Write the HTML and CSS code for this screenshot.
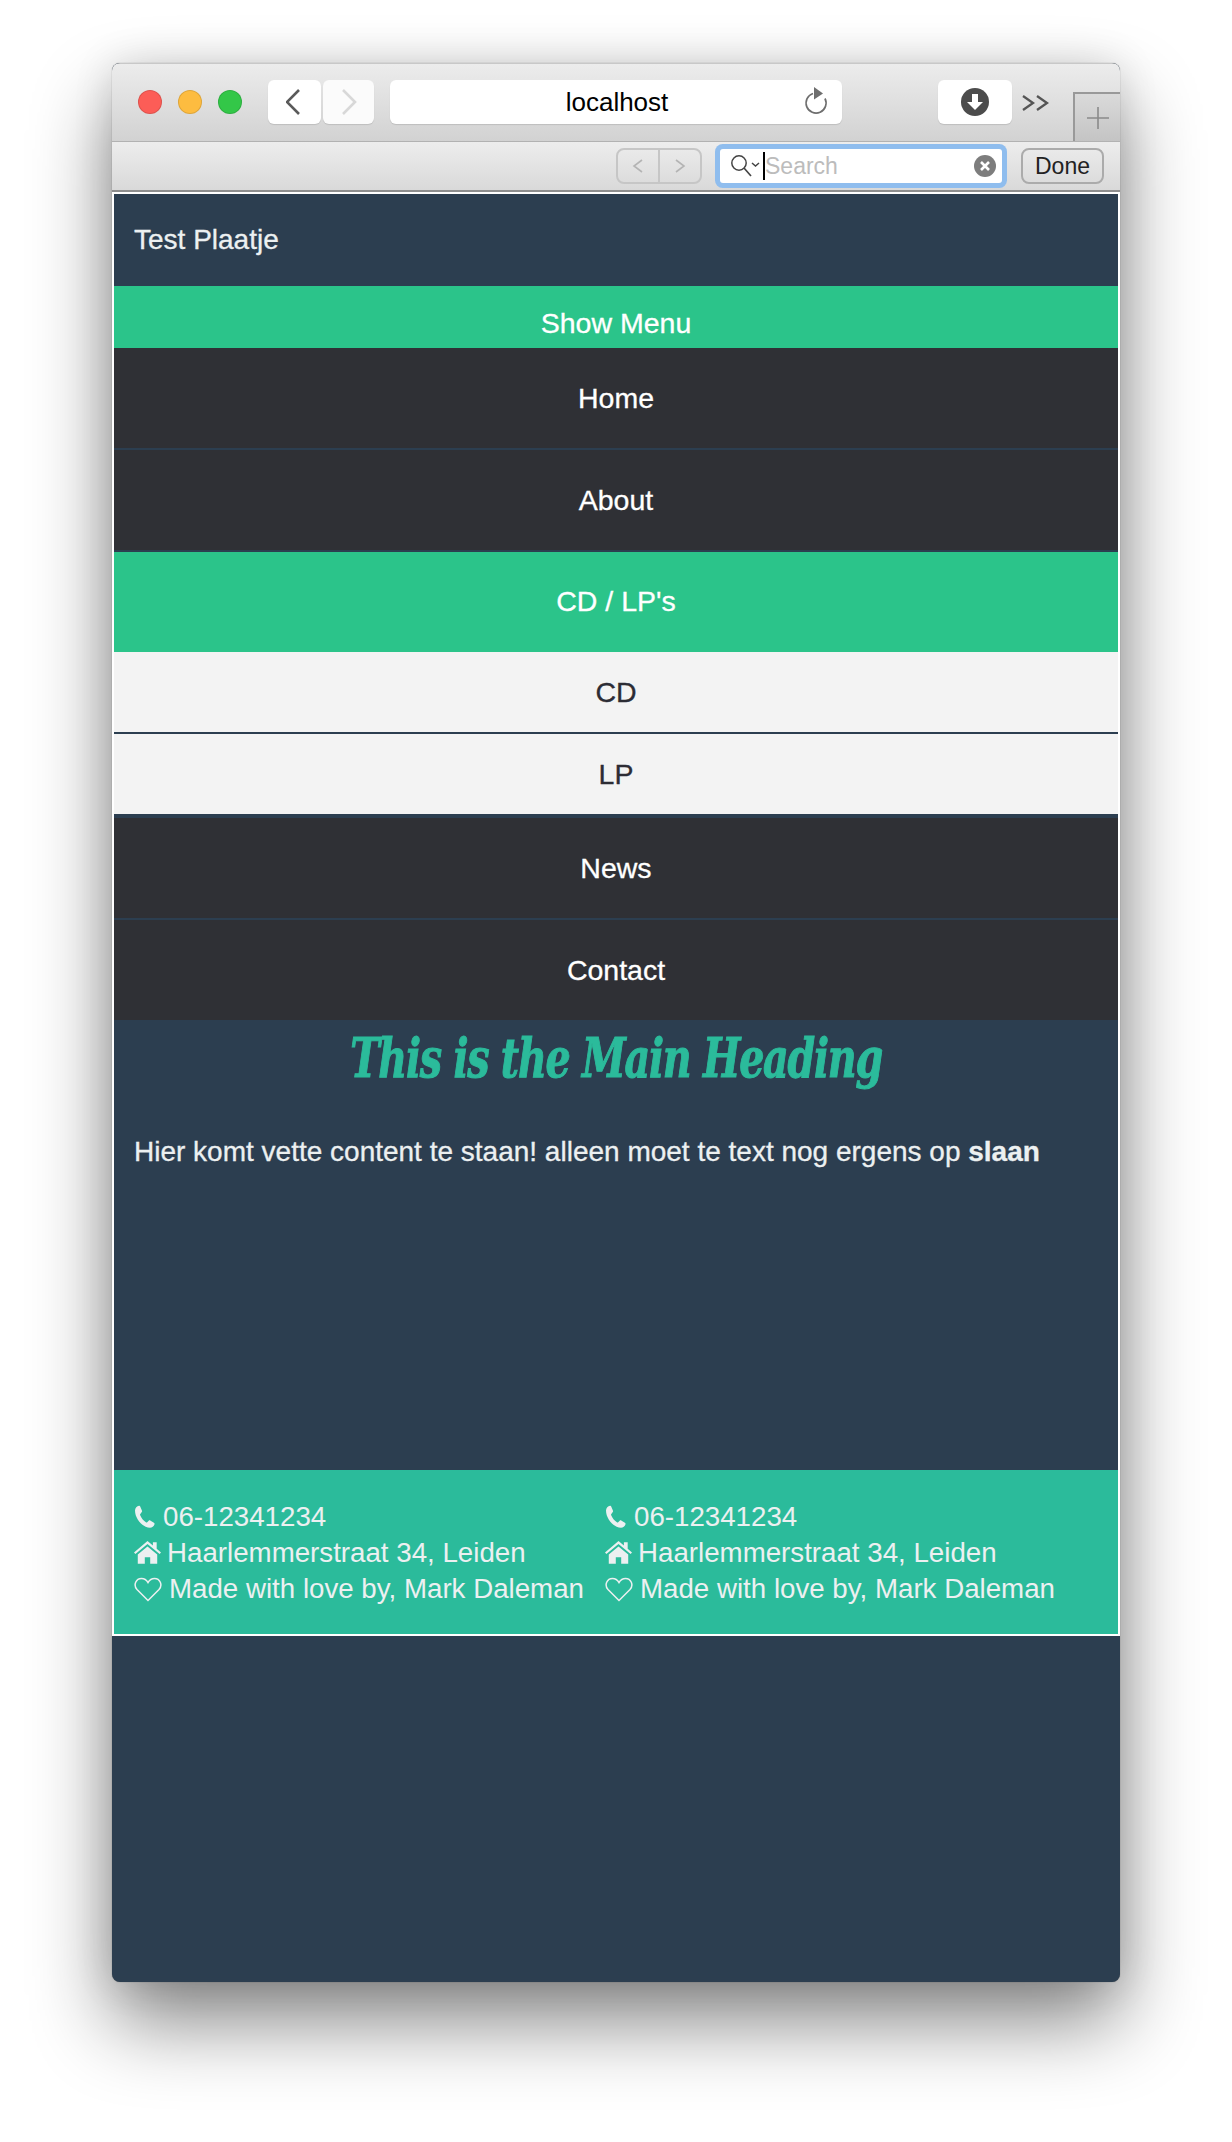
FILE: index.html
```html
<!DOCTYPE html>
<html>
	<head>
		<meta charset="utf-8">
		<title>localhost</title>
		<link rel="stylesheet" href="styles.css">
	</head>
	<body>
		<div class="window">
			<div class="titlebar">
				<div class="lights">
					<span class="light red"></span>
					<span class="light yellow"></span>
					<span class="light green"></span>
				</div>
				<div class="history">
					<span class="tool back">
						<svg width="18" height="28" viewBox="0 0 18 28"><path d="M13 2 1 14l12 12" fill="none" stroke="#5a5a5a" stroke-width="2.6"/></svg>
					</span>
					<span class="tool forward">
						<svg width="18" height="28" viewBox="0 0 18 28"><path d="M3 2l12 12L3 26" fill="none" stroke="#d8d8d8" stroke-width="2.6"/></svg>
					</span>
				</div>
				<div class="address">
					<span class="address-text">localhost</span>
					<svg class="reload" width="26" height="30" viewBox="0 0 26 30"><path d="M10 7.500a10 10 0 1 0 12 5" fill="none" stroke="#6e6e6e" stroke-width="1.700"/><path d="M11 1l9 6.500-9 6z" fill="#6e6e6e"/></svg>
				</div>
				<span class="tool download">
					<svg width="28" height="28" viewBox="0 0 28 28"><circle cx="14" cy="14" r="14" fill="#4c4c4c"/><path d="M11 6h6v8h5l-8 8-8-8h5z" fill="#fff"/></svg>
				</span>
				<svg class="more" width="28" height="18" viewBox="0 0 28 18"><path d="M2 2l10 7-10 7M16 2l10 7-10 7" fill="none" stroke="#555" stroke-width="2.300"/></svg>
				<div class="newtab">
					<svg width="24" height="24" viewBox="0 0 24 24"><path d="M12 1v22M1 12h22" stroke="#8a8a8a" stroke-width="1.600"/></svg>
				</div>
			</div>
			<div class="findbar">
				<div class="stepper">
					<span class="step">
						<svg width="12" height="16" viewBox="0 0 12 16"><path d="M10 2 2 8l8 6" fill="none" stroke="#b4b4b4" stroke-width="1.600"/></svg>
					</span>
					<span class="step">
						<svg width="12" height="16" viewBox="0 0 12 16"><path d="M2 2l8 6-8 6" fill="none" stroke="#b4b4b4" stroke-width="1.600"/></svg>
					</span>
				</div>
				<div class="search">
					<svg width="32" height="26" viewBox="0 0 32 26"><circle cx="9" cy="10" r="7.200" fill="none" stroke="#444" stroke-width="1.500"/><path d="M14 15l7 8" stroke="#444" stroke-width="1.700"/><path d="M22 10l3.500 3 3.500-3" fill="none" stroke="#444" stroke-width="1.500"/></svg>
					<span class="caret"></span>
					<span class="search-text">Search</span>
					<svg class="clear" width="22" height="22" viewBox="0 0 22 22"><circle cx="11" cy="11" r="11" fill="#7d7d7d"/><path d="M7 7l8 8M15 7l-8 8" stroke="#fff" stroke-width="2.600"/></svg>
				</div>
				<span class="done">Done</span>
			</div>
			<div class="page">
				<div class="brand">Test Plaatje</div>
				<div class="menu-toggle">Show Menu</div>
				<ul class="nav">
					<li class="nav-item"><a href="#">Home</a></li>
					<li class="nav-item"><a href="#">About</a></li>
					<li class="nav-item active"><a href="#">CD / LP's</a></li>
					<li class="sub-item"><a href="#">CD</a></li>
					<li class="sub-item last"><a href="#">LP</a></li>
					<li class="nav-item"><a href="#">News</a></li>
					<li class="nav-item end"><a href="#">Contact</a></li>
				</ul>
				<div class="content">
					<h1>This is the Main Heading</h1>
					<p>Hier komt vette content te staan! alleen moet te text nog ergens op <strong>slaan</strong></p>
				</div>
				<div class="footer">
					<div class="footer-col">
						<div class="line">
							<svg class="ico phone" width="22" height="24" viewBox="0 0 22 24"><path d="M1 5.500C1 3 3 1 5 .8c.7 0 1 .3 1.300 1l1.700 4c.2.600 0 1-.4 1.500L6.300 9c-.3.400-.3.800-.1 1.300 1.200 3 3 5.200 5.700 7 .5.300.9.300 1.300-.1l1.500-1.500c.5-.4 1-.5 1.500-.2l3.700 2.300c.6.400.8.800.6 1.400-.6 2-2.500 3.500-4.500 3.500C9 22.700 1 14 1 5.500z" fill="#ecf0f1"/></svg>
							<span>06-12341234</span>
						</div>
						<div class="line">
							<svg class="ico house" width="27" height="24" viewBox="0 0 25 22"><path d="M12.500 0 0 10.500l1.300 1.500 11.200-9.400L23.700 12l1.300-1.500-4-3.400V1h-3.500v3.100z" fill="#ecf0f1"/><path d="M12.500 5 3.500 12.500V21h6.500v-6h5v6h6.500v-8.500z" fill="#ecf0f1"/></svg>
							<span>Haarlemmerstraat 34, Leiden</span>
						</div>
						<div class="line">
							<svg class="ico" width="28" height="25" viewBox="0 0 28 25"><path d="M14 23.500 3 12.500C-1 8 2 1.500 7.500 1.500c3 0 5 1.500 6.500 4 1.500-2.500 3.500-4 6.500-4C26 1.500 29 8 25 12.500z" fill="none" stroke="#ecf0f1" stroke-width="1.500"/></svg>
							<span>Made with love by, Mark Daleman</span>
						</div>
					</div>
					<div class="footer-col">
						<div class="line">
							<svg class="ico phone" width="22" height="24" viewBox="0 0 22 24"><path d="M1 5.500C1 3 3 1 5 .8c.7 0 1 .3 1.300 1l1.700 4c.2.600 0 1-.4 1.500L6.300 9c-.3.400-.3.800-.1 1.300 1.200 3 3 5.200 5.700 7 .5.300.9.300 1.300-.1l1.500-1.500c.5-.4 1-.5 1.500-.2l3.700 2.300c.6.400.8.800.6 1.400-.6 2-2.500 3.500-4.500 3.500C9 22.700 1 14 1 5.500z" fill="#ecf0f1"/></svg>
							<span>06-12341234</span>
						</div>
						<div class="line">
							<svg class="ico house" width="27" height="24" viewBox="0 0 25 22"><path d="M12.500 0 0 10.500l1.300 1.500 11.200-9.400L23.700 12l1.300-1.500-4-3.400V1h-3.500v3.100z" fill="#ecf0f1"/><path d="M12.500 5 3.500 12.500V21h6.500v-6h5v6h6.500v-8.500z" fill="#ecf0f1"/></svg>
							<span>Haarlemmerstraat 34, Leiden</span>
						</div>
						<div class="line">
							<svg class="ico" width="28" height="25" viewBox="0 0 28 25"><path d="M14 23.500 3 12.500C-1 8 2 1.500 7.500 1.500c3 0 5 1.500 6.500 4 1.500-2.500 3.500-4 6.500-4C26 1.500 29 8 25 12.500z" fill="none" stroke="#ecf0f1" stroke-width="1.500"/></svg>
							<span>Made with love by, Mark Daleman</span>
						</div>
					</div>
				</div>
			</div>
		</div>
	</body>
</html>
```

FILE: styles.css
```css
* { margin: 0; padding: 0; box-sizing: border-box; text-decoration: none; list-style: none;}
body { padding: 63px 112px 160px; background: #fff; font-family: "Liberation Sans", Arial, sans-serif;}
a { color: inherit;}

.window { width: 1008px; height: 1919px; background: #2c3e50; border-radius: 8px; overflow: hidden; box-shadow: 0 0 1px rgba(0,0,0,.5), 0 40px 80px rgba(0,0,0,.48), 0 0 40px rgba(0,0,0,.12);}

.titlebar { height: 79px; display: flex; align-items: flex-start; padding: 16px 0 0 26px; background: linear-gradient(#ececec, #d2d2d2); border-top: 1px solid #c8c8c8; border-bottom: 1px solid #b2b2b2;}
.lights { display: flex; gap: 16px; margin-top: 10px;}
.light { width: 24px; height: 24px; border-radius: 50%; border: 1px solid rgba(0,0,0,.12);}
.red { background: #fc5d57;}
.yellow { background: #fdbc40;}
.green { background: #33c748;}

.history { display: flex; gap: 2px; margin-left: 26px;}
.tool { display: flex; align-items: center; justify-content: center; height: 44px; background: #fff; border-radius: 6px; box-shadow: 0 1px 1px rgba(0,0,0,.12);}
.back { width: 53px;}
.forward { width: 51px; background: #fbfbfb;}
.address { width: 452px; height: 44px; margin-left: 16px; padding: 1px 0 0 2px; background: #fff; border-radius: 6px; box-shadow: 0 1px 1px rgba(0,0,0,.12); display: flex; align-items: center; position: relative;}
.address-text { flex: 1; text-align: center; font-size: 26px; color: #000;}
.reload { position: absolute; right: 13px; top: 6px;}
.download { width: 74px; margin-left: 96px;}
.more { margin: 14px 0 0 9px;}
.newtab { width: 47px; height: 49px; margin: 12px 0 0 24px; border-left: 2px solid #999; border-top: 2px solid #999; display: flex; align-items: center; justify-content: center; background: linear-gradient(#dadada, #c4c4c4);}

.findbar { height: 50px; display: flex; align-items: center; padding: 0 16px 0 504px; background: linear-gradient(#ededed, #d9d9d9); border-bottom: 2px solid #8e8e8e;}
.stepper { display: flex; width: 86px; height: 36px; border: 2px solid #c6c6c6; border-radius: 8px;}
.step { flex: 1; display: flex; align-items: center; justify-content: center;}
.step + .step { border-left: 2px solid #c6c6c6;}
.search { width: 282px; height: 34px; margin: 0 19px 0 18px; background: #fff; border-radius: 3px; box-shadow: 0 0 0 5px #8fbdee; display: flex; align-items: center; padding: 0 6px 0 10px;}
.caret { width: 2px; height: 28px; margin-left: 1px; background: #000;}
.search-text { flex: 1; font-size: 23px; color: #bcbcbc;}
.done { width: 83px; height: 36px; border: 2px solid #ababab; border-radius: 8px; font-size: 23px; line-height: 32px; text-align: center; color: #222;}

.page { border: 2px solid #fff; height: 1444px; background: #2c3e50;}
.brand { height: 92px; padding: 0 20px; line-height: 92px; font-size: 28px; color: #ecf0f1; -webkit-text-stroke: .3px #ecf0f1;}
.menu-toggle { height: 62px; background: #2bc48a; color: #fff; text-align: center; font-size: 28.500px; padding-top: 21px; line-height: 32px; -webkit-text-stroke: .3px #fff;}

.nav a { -webkit-text-stroke: .3px;}
.nav-item a { display: block; height: 102px; line-height: 100px; text-align: center; background: #2f3035; color: #fff; font-size: 28.500px; border-bottom: 2px solid #2c3e50;}
.nav-item.active a { height: 100px; line-height: 98px; background: #2bc48a; border-bottom: 0;}
.nav-item.end a { height: 100px; border-bottom: 0;}
.sub-item a { display: block; height: 82px; line-height: 80px; text-align: center; background: #f3f3f3; color: #2c2c34; font-size: 28.500px; border-bottom: 2px solid #2c3e50;}
.sub-item.last { margin-bottom: 4px;}
.sub-item.last a { height: 80px; border-bottom: 0;}

.content { height: 450px; padding: 0 20px;}
.content h1 { height: 76px; line-height: 76px; text-align: center; font-family: "DejaVu Serif", serif; font-stretch: condensed; font-style: italic; font-weight: bold; font-size: 54px; letter-spacing: -1.500px; white-space: nowrap; transform: scaleX(.815); -webkit-text-stroke: 1px #2bbb9b; color: #2bbb9b;}
.content p { margin-top: 38px; font-size: 28px; line-height: 36px; color: #ecf0f1; -webkit-text-stroke: .3px #ecf0f1;}

.footer { height: 164px; padding: 29px 20px 0; background: #2bbb9b; display: flex; color: #ecf0f1; font-size: 27.700px;}
.footer-col { width: 471px;}
.line { display: flex; align-items: center; height: 36px; white-space: nowrap;}
.ico { margin-right: 7px;}
.house { margin-right: 6px;}
```
